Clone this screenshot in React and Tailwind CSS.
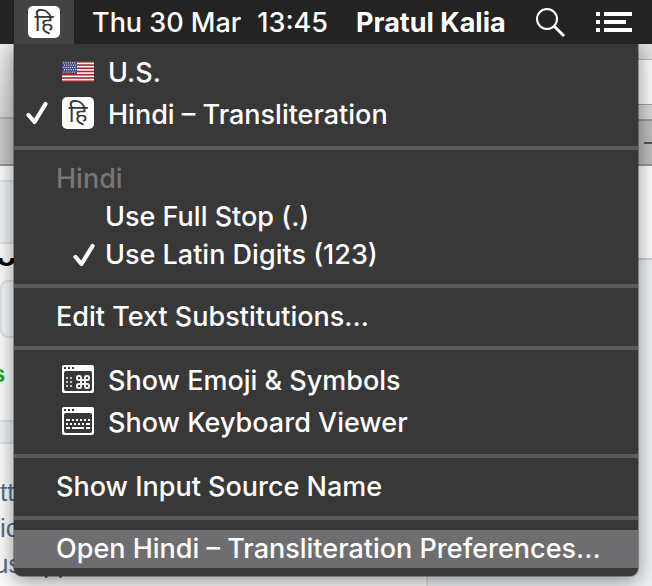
import clsx from "clsx";

function HindiBadge() {
  return (
    <span className="flex h-8 w-8 shrink-0 items-center justify-center overflow-hidden rounded-[5px] bg-white font-['Noto_Sans','Noto_Sans_Devanagari',sans-serif] text-2xl leading-8 font-normal text-[#383838]">
      हि
    </span>
  );
}

function FlagIcon() {
  const stripes = [0, 1, 2, 3, 4, 5, 6];
  const rows = [0, 1, 2, 3, 4];
  const cols = [0, 1, 2, 3, 4, 5];
  return (
    <svg width="32" height="21" viewBox="0 0 32 21" className="shrink-0" aria-hidden="true">
      <rect width="32" height="21" fill="#fff" />
      {stripes.map((i) => (
        <rect key={i} y={i * 3.23} width="32" height="1.62" fill="#b2202f" />
      ))}
      <rect width="15" height="13" fill="#45447c" />
      {rows.map((r) =>
        cols.map((c) => (
          <circle key={`${r}-${c}`} cx={1.8 + c * 2.2 + (r % 2) * 0.8} cy={1.8 + r * 2.3} r="0.6" fill="#fff" />
        ))
      )}
    </svg>
  );
}

function WindowFrame({ children }) {
  return (
    <svg width="32" height="28" viewBox="0 0 32 28" className="shrink-0" aria-hidden="true">
      <path
        fill="#fff"
        fillRule="evenodd"
        d="M2 0H30Q32 0 32 2V26Q32 28 30 28H2Q0 28 0 26V2Q0 0 2 0ZM4 6Q2 6 2 8V24Q2 26 4 26H28Q30 26 30 24V8Q30 6 28 6Z"
      />
      <path fill="#383838" d="M2 2h2v2H2zM6 2h2v2H6zM10 2h2v2h-2z" />
      {children}
    </svg>
  );
}

function EmojiIcon() {
  return (
    <WindowFrame>
      <path
        fill="#c4c4c4"
        d="M4 12h2v2H4zM8 12h2v2H8zM4 16h2v2H4zM8 16h2v2H8zM4 20h2v2H4zM8 20h2v2H8z"
      />
      <path
        fill="none"
        stroke="#efefef"
        strokeWidth="2"
        d="M19 15H16.5A1.5 1.5 0 0 1 15 13.5V12.5A1.5 1.5 0 0 1 16.5 11H17.5A1.5 1.5 0 0 1 19 12.5V21.5A1.5 1.5 0 0 1 17.5 23H16.5A1.5 1.5 0 0 1 15 21.5V20.5A1.5 1.5 0 0 1 16.5 19H25.5A1.5 1.5 0 0 1 27 20.5V21.5A1.5 1.5 0 0 1 25.5 23H24.5A1.5 1.5 0 0 1 23 21.5V12.5A1.5 1.5 0 0 1 24.5 11H25.5A1.5 1.5 0 0 1 27 12.5V13.5A1.5 1.5 0 0 1 25.5 15Z"
      />
    </WindowFrame>
  );
}

function KeyboardIcon() {
  return (
    <WindowFrame>
      <path
        fill="#fff"
        d="M4 12h4v2H4zM10 12h2v2h-2zM14 12h2v2h-2zM18 12h2v2h-2zM22 12h2v2h-2zM26 12h2v2h-2zM4 16h2v2H4zM8 16h2v2H8zM12 16h2v2h-2zM16 16h2v2h-2zM20 16h2v2h-2zM24 16h4v2h-4zM4 20h4v2H4zM10 20h12v2H10zM24 20h4v2h-4z"
      />
    </WindowFrame>
  );
}

function Check() {
  return (
    <svg width="24" height="24" viewBox="0 0 24 24" className="shrink-0" aria-hidden="true">
      <path
        d="M2.500 14L8.500 21L19.500 3"
        fill="none"
        stroke="#fff"
        strokeWidth="4.2"
        strokeLinecap="round"
        strokeLinejoin="round"
      />
    </svg>
  );
}

function MenuItem({ children, icon, checked, nested, active }) {
  return (
    <button
      type="button"
      role="menuitem"
      className={clsx(
        "flex w-full items-center text-left whitespace-nowrap",
        icon ? "h-[42px]" : "h-[38px]",
        active && "bg-[#6e6e70]"
      )}
    >
      <span className={clsx("flex shrink-0", nested ? "w-[91px] justify-end pr-2" : icon ? "w-12 pl-3" : "w-[42px]")}>
        {checked && <Check />}
      </span>
      {icon && <span className="mr-3.5 flex w-8 shrink-0 items-center">{icon}</span>}
      <span className={clsx(icon && "pt-1")}>{children}</span>
    </button>
  );
}

function Separator() {
  return <div role="separator" className="h-1 bg-[#5b5b5b]" />;
}

function MenuBar() {
  return (
    <header className="relative z-20 flex h-11 items-center bg-[#232323] pl-3.5 text-[27px] font-[550] whitespace-nowrap text-white">
      <button type="button" aria-label="Input source" className="flex h-11 w-[60px] items-center justify-center bg-[#434343]">
        <HindiBadge />
      </button>
      <span className="ml-[18px] pt-0.5">Thu 30 Mar</span>
      <span className="ml-4 pt-0.5">13:45</span>
      <span className="ml-7 pt-0.5 font-[650]">Pratul Kalia</span>
      <button type="button" aria-label="Spotlight" className="ml-auto">
        <svg width="30" height="30" viewBox="0 0 30 30" fill="none" stroke="#fff" aria-hidden="true">
          <circle cx="11" cy="12" r="10" strokeWidth="2" />
          <path d="M18 19L28 29" strokeWidth="3" />
        </svg>
      </button>
      <button type="button" aria-label="Notification Center" className="mr-5 ml-[30px]">
        <svg width="36" height="20" viewBox="0 0 36 20" fill="#fff" aria-hidden="true">
          <path d="M0 0h4v4H0zM8 0h28v4H8zM0 8h4v4H0zM8 8h22v4H8zM0 16h4v4H0zM8 16h28v4H8z" />
        </svg>
      </button>
    </header>
  );
}

// Browser window that sits behind the open menu
function Backdrop() {
  return (
    <div className="absolute inset-0 flex overflow-hidden pt-11 font-['Liberation_Sans',Arial,sans-serif]" aria-hidden="true">
      <div className="flex w-[428px] shrink-0 flex-col border-r-2 border-[#dbe2e6] bg-[#fafafa]">
        <div className="h-[75px] shrink-0 border-b-2 border-[#b0b0b0] bg-linear-to-b from-[#ececec] to-[#d4d4d4]" />
        <div className="h-[47px] shrink-0 border-b-2 border-[#989898] bg-[#c6c6c6]" />
        <div className="mt-3.5 h-16 shrink-0 border-y-2 border-[#dbe2e6] bg-[#edf1f4]" />
        <div className="mt-3.5 h-2.5 shrink-0 overflow-hidden">
          <p className="-mt-[18px] -ml-1 text-[34px] leading-7 font-bold text-black">o</p>
        </div>
        <div className="mt-3 h-[58px] shrink-0 rounded-lg border-2 border-[#dbe2e6] bg-[#f4f6f8]" />
        <p className="mt-[18px] -ml-2 h-9 shrink-0 text-2xl leading-9 font-bold text-[#1aab1a]">s</p>
        <div className="mt-7 h-6 shrink-0 border-y-2 border-[#dbe2e6] bg-[#edf1f4]" />
        <div className="mt-[30px] shrink-0 text-[26px] leading-9 text-[#586e84]">
          <p>ttings</p>
          <p>ic</p>
          <p className="-ml-1.5">us app</p>
        </div>
      </div>
      <div className="flex flex-1 flex-col bg-[#edf1f4]">
        <div className="h-4 shrink-0 border-b border-[#b5b5b5] bg-[#e0e0e0]" />
        <div className="h-[45px] shrink-0 border-b border-[#a0a0a0] bg-[#fafafa]" />
        <div className="h-3.5 shrink-0 bg-[#d6d6d6]" />
        <div className="flex h-[47px] shrink-0 items-center justify-end border-y-2 border-[#989898] bg-[#bcbcbc]">
          <span className="h-0.5 w-2 bg-[#555555]" />
        </div>
        <div className="h-[94px] shrink-0 border-b-2 border-[#c9d0d5] bg-[#fdfdfd]" />
      </div>
    </div>
  );
}

export default function App() {
  return (
    <div className="relative min-h-screen overflow-hidden bg-[#fafafa] font-['Inter',sans-serif]">
      <Backdrop />
      <MenuBar />
      <div
        role="menu"
        className="relative z-10 mr-3.5 ml-3.5 overflow-hidden rounded-b-lg bg-[#383838] pb-2 text-[27px] font-[450] text-white shadow-[0_4px_20px_rgba(0,0,0,0.45),0_0_0_1px_rgba(0,0,0,0.3)]"
      >
        <div className="pt-1.5 pb-3">
          <MenuItem icon={<FlagIcon />}>U.S.</MenuItem>
          <MenuItem icon={<HindiBadge />} checked>
            Hindi – Transliteration
          </MenuItem>
        </div>
        <Separator />
        <div className="py-2.5">
          <h2 className="flex h-[38px] items-center pl-[42px] text-[#767676]">Hindi</h2>
          <MenuItem nested>Use Full Stop (.)</MenuItem>
          <MenuItem nested checked>
            Use Latin Digits (123)
          </MenuItem>
        </div>
        <Separator />
        <div className="py-2.5">
          <MenuItem>Edit Text Substitutions...</MenuItem>
        </div>
        <Separator />
        <div className="pt-2 pb-3">
          <MenuItem icon={<EmojiIcon />}>Show Emoji &amp; Symbols</MenuItem>
          <MenuItem icon={<KeyboardIcon />}>Show Keyboard Viewer</MenuItem>
        </div>
        <Separator />
        <div className="py-2.5">
          <MenuItem>Show Input Source Name</MenuItem>
        </div>
        <Separator />
        <div className="pt-2.5">
          <MenuItem active>Open Hindi – Transliteration Preferences...</MenuItem>
        </div>
      </div>
    </div>
  );
}
